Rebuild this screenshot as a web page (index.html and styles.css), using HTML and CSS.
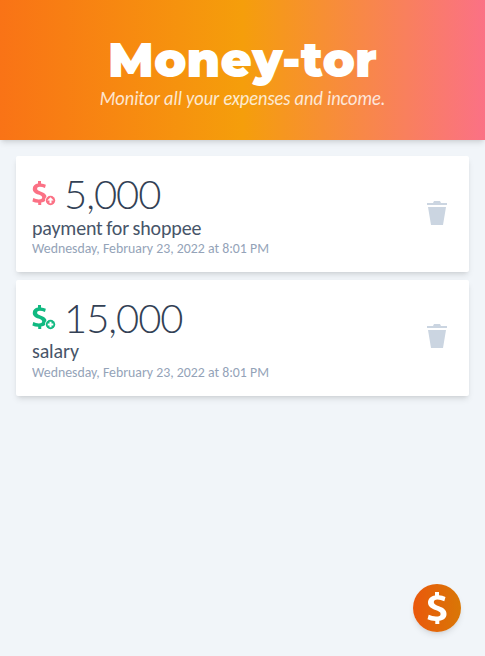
FILE: index.html
```html
<!DOCTYPE html>
<html lang="en"><head><meta charset="utf-8"><title>Money-tor</title><link rel="stylesheet" href="styles.css"></head>
<body>
<svg class="defs" aria-hidden="true"><symbol id="dollar" viewBox="0 0 20 32"><path d="M8 0h4v3.300Q15.500 3.500 18.500 5L17.300 9.200Q13.500 7.500 10.500 7.500Q6.800 7.500 6.800 10.200C6.800 12.300 9 13 12 14.200C16.500 15.900 19.500 17.800 19.500 22C19.500 26 16.500 28.300 12.300 28.800V32H8.300V29Q3.800 28.800.5 27.200L1.700 22.800Q5.300 24.500 9 24.500Q13.600 24.500 13.600 21.900C13.600 19.900 11.500 19.200 8.500 18C4.500 16.500 1 14.700 1 10.500C1 6.500 4 4 8 3.400Z" fill="currentColor"/></symbol></svg>
<header class="hero"><h1 class="title">Money-tor</h1><p class="tagline">Monitor all your expenses and income.</p></header>
<main class="list">
<article class="card"><div class="info"><div class="amount-row"><svg class="coin expense" viewBox="0 0 24 28"><use href="#dollar" x="0" y="2" width="15" height="24"/><circle cx="18.500" cy="21.500" r="5.500" fill="#fff"/><circle cx="18.500" cy="21.500" r="4.700" fill="currentColor"/><path d="M18.500 18.300l3.200 3.200h-2.200v2.700h-2v-2.700h-2.200z" fill="#fff"/></svg><span class="amount">5,000</span></div><p class="note">payment for shoppee</p><p class="date">Wednesday, February 23, 2022 at 8:01 PM</p></div><button class="remove" aria-label="Delete"><svg viewBox="0 0 20 24"><path d="M0 2h6l1-2h6l1 2h6v2H0zM1 6h18l-3 18H4z" fill="currentColor"/></svg></button></article>
<article class="card"><div class="info"><div class="amount-row"><svg class="coin income" viewBox="0 0 24 28"><use href="#dollar" x="0" y="2" width="15" height="24"/><circle cx="18.500" cy="21.500" r="5.500" fill="#fff"/><circle cx="18.500" cy="21.500" r="4.700" fill="currentColor"/><path d="M18.500 18.700v5.600M15.700 21.500h5.600" stroke="#fff" stroke-width="2"/></svg><span class="amount">15,000</span></div><p class="note">salary</p><p class="date">Wednesday, February 23, 2022 at 8:01 PM</p></div><button class="remove" aria-label="Delete"><svg viewBox="0 0 20 24"><path d="M0 2h6l1-2h6l1 2h6v2H0zM1 6h18l-3 18H4z" fill="currentColor"/></svg></button></article>
</main>
<button class="add" aria-label="Add"><svg><use href="#dollar"/></svg></button>
</body></html>
```

FILE: styles.css
```css
*{box-sizing:border-box;margin:0;padding:0}
body{min-height:100vh;background:#f1f5f9;font-family:Carlito,Lato,sans-serif;color:#334155}
button{border:0;background:none}
svg{display:block}
.defs{display:none}
.hero{height:140px;padding-top:36px;text-align:center;color:#fff;background:linear-gradient(to right,#f97316,#f59e0b,#fb7185);box-shadow:0 4px 6px -1px #0000001a,0 2px 4px -2px #0000001a}
.title{font:900 48px/48px Montserrat,"Open Sans",sans-serif}
.tagline{font-size:20px;line-height:28px;font-style:italic;transform:scaleX(.916);opacity:.8}
.list{display:grid;gap:7.6px;padding:16px}
.card{height:116px;padding:15px 16px;display:flex;justify-content:space-between;align-items:flex-start;background:#fff;border-radius:2px;box-shadow:0 4px 6px -1px #0000001a,0 2px 4px -2px #0000001a}
.amount-row{display:flex;align-items:center;gap:8px;height:46px}
.coin{width:24px;height:28px;margin-bottom:2px}
.expense{color:#fb7185}
.income{color:#10b981}
.amount{font-family:Lato,sans-serif;font-size:40px;font-weight:300;line-height:46px;letter-spacing:-.026em}
.note{margin-top:.6px;font-size:20px;line-height:20px;letter-spacing:-.15px;word-spacing:-.8px;color:#475569}
.date{margin-top:.4px;font-size:14.6px;line-height:20px;transform:scaleX(.947);transform-origin:left;color:#94a3b8}
.remove{width:20px;margin:29.8px 6px 0 0;color:#cbd5e1}
.add{position:fixed;right:24px;bottom:24px;width:48px;height:48px;border-radius:50%;display:grid;place-items:center;color:#fff;background:linear-gradient(to right,#ea580c,#d97706);box-shadow:0 4px 6px -1px #0000001a,0 2px 4px -2px #0000001a}
.add svg{width:20px;height:32px}
```
